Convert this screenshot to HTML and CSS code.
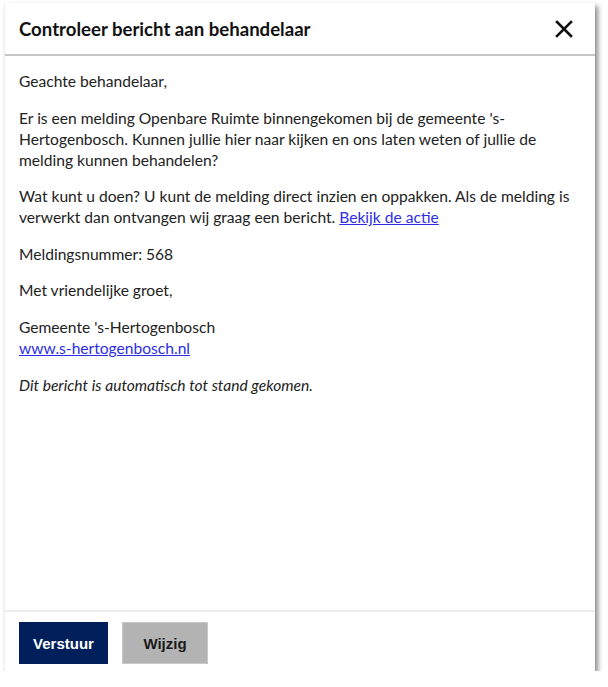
FILE: index.html
```html
<!DOCTYPE html>
<html lang="nl">
<head>
<meta charset="utf-8">
<link rel="stylesheet" href="styles.css">
</head>
<body>
<div class="dialog">
  <div class="header">
    <h1 class="title">Controleer bericht aan behandelaar</h1>
    <span class="close" aria-label="Sluiten">
      <svg width="18" height="18" viewBox="0 0 18 18"><path d="M2 2 L16 16 M16 2 L2 16" stroke="#111" stroke-width="2.6" stroke-linecap="square" fill="none"/></svg>
    </span>
  </div>
  <div class="content">
    <p>Geachte behandelaar,</p>
    <p>Er is een melding Openbare Ruimte binnengekomen bij de gemeente 's-Hertogenbosch. Kunnen jullie hier naar kijken en ons laten weten of jullie de melding kunnen behandelen?</p>
    <p>Wat kunt u doen? U kunt de melding direct inzien en oppakken. Als de melding is verwerkt dan ontvangen wij graag een bericht. <a href="#">Bekijk de actie</a></p>
    <p>Meldingsnummer: 568</p>
    <p>Met vriendelijke groet,</p>
    <p>Gemeente 's-Hertogenbosch<br><a href="#">www.s-hertogenbosch.nl</a></p>
    <p class="note">Dit bericht is automatisch tot stand gekomen.</p>
  </div>
  <div class="footer">
    <button class="btn btn-primary">Verstuur</button>
    <button class="btn btn-secondary">Wijzig</button>
  </div>
</div>
</body>
</html>
```
FILE: styles.css
```css
html, body {
  margin: 0;
  padding: 0;
  background: #fff;
}
body {
  padding: 3px 0 0 4px;
  font-family: Lato, "Open Sans", sans-serif;
  color: #222;
}
.dialog {
  width: 591px;
  height: 668px;
  background: #fff;
  display: flex;
  flex-direction: column;
  box-shadow: 3px 3px 5px rgba(0,0,0,0.45);
  border-left: 1px solid #f0f0f0;
  box-sizing: border-box;
}
.header {
  height: 53px;
  box-sizing: border-box;
  border-bottom: 2px solid #c6c6c6;
  display: flex;
  align-items: center;
  justify-content: space-between;
  padding: 0 22px 0 14px;
}
.title {
  margin: 0;
  font-size: 18.6px;
  font-weight: 700;
  color: #111;
}
.close {
  display: flex;
  width: 18px;
  height: 18px;
}
.content {
  flex: 1;
  padding: 15px 14px 0 14px;
  font-size: 15.6px;
  line-height: 21px;
}
.content p {
  margin: 0 0 15.6px 0;
}
.content a {
  color: #2d2de6;
  text-decoration: underline;
}
.note {
  font-style: italic;
}
.footer {
  border-top: 2px solid #ebebeb;
  padding: 10px 14px 7px 14px;
  display: flex;
  gap: 14px;
}
.btn {
  height: 42px;
  font-family: "Liberation Sans", Arial, sans-serif;
  font-weight: 700;
  font-size: 15px;
  border: 1px solid transparent;
  padding: 0;
  cursor: pointer;
}
.btn-primary {
  width: 89px;
  background: #011f5b;
  color: #fff;
}
.btn-secondary {
  width: 86px;
  background: #b3b3b3;
  border-color: #c8c8c8;
  color: #1a1a1a;
}
```
